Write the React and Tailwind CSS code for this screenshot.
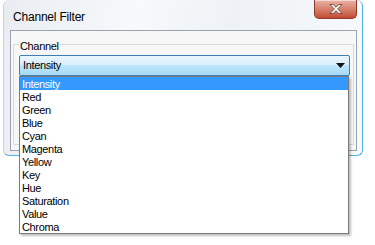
// App.jsx
// Windows 7 style "Channel Filter" dialog with an open channel combo box.
const CHANNELS = [
  'Intensity',
  'Red',
  'Green',
  'Blue',
  'Cyan',
  'Magenta',
  'Yellow',
  'Key',
  'Hue',
  'Saturation',
  'Value',
  'Chroma',
];

const CloseButton = () => (
  <div className="flex h-[19px] w-[43px] items-center justify-center rounded-b-[5px] border border-t-0 border-[#8a3b2c] bg-gradient-to-b from-[#eab3a6] via-[#d7816d] to-[#c24a30] shadow-[inset_0_1px_0_rgba(255,255,255,0.5)]">
    <svg width="14" height="10" viewBox="0 0 14 10" aria-hidden="true">
      <path
        d="M1 0.5h3.2L7 3.3 9.8 0.5H13L8.6 5 13 9.5H9.8L7 6.7 4.2 9.5H1L5.4 5z"
        fill="#ffffff"
        stroke="#5a3a34"
        strokeWidth="0.8"
        strokeLinejoin="round"
      />
    </svg>
  </div>
);

const ComboBox = ({ value }) => (
  <div className="flex h-[21px] items-center justify-between rounded-[2px] border border-[#3c7fb1] bg-[linear-gradient(to_bottom,#eaf6fd_0%,#d9f0fc_45%,#bee6fd_50%,#a7d9f5_100%)] pl-[3px] pr-[4px]">
    <span className="text-[11px] leading-[13px] tracking-[-0.35px] text-black">{value}</span>
    <svg width="9" height="5" viewBox="0 0 9 5" aria-hidden="true">
      <path d="M0 0h9L4.5 5z" fill="#111111" />
    </svg>
  </div>
);

const DropList = ({ items, selected }) => (
  <div className="absolute left-[19px] top-[76px] w-[330px] border border-[#7a7a7a] bg-white shadow-[2px_2px_2px_rgba(0,0,0,0.25)]">
    {items.map((item) => (
      <div
        key={item}
        className={`h-[13px] pl-[2px] text-[11px] leading-[14px] tracking-[-0.35px] ${
          item === selected ? 'bg-[#3399ff] text-white' : 'text-black'
        }`}
      >
        {item}
      </div>
    ))}
  </div>
);

export default function App() {
  const selected = 'Intensity';

  return (
    <div className="relative h-[245px] w-[375px] overflow-hidden bg-white font-['Liberation_Sans',Arial,sans-serif]">
      <div className="ml-[3px] h-[156px] w-[360px] rounded-[6px] border border-t-0 border-l-[#c9d3dc] border-r-[#4fb3e3] border-b-[#4fb3e3] bg-[linear-gradient(100deg,#e9edf2_0%,#f7f9fb_35%,#eef2f6_60%,#f8fafc_100%)]">
        <div className="flex h-[30px] items-start justify-between">
          <span className="pl-[9px] pt-[10px] text-[12px] leading-[14px] tracking-[-0.2px] text-black">
            Channel Filter
          </span>
          <div className="mr-[5px]">
            <CloseButton />
          </div>
        </div>
        <div className="ml-[6px] mr-[5px] h-[121px] border border-[#9aa4ad] bg-[#f7f7f7] px-[2px] pt-[13px]">
          <div className="relative h-[101px] border border-[#d5dce2]">
            <span className="absolute left-[5px] top-[-5px] bg-[#f7f7f7] px-[1px] text-[11px] leading-[13px] tracking-[-0.35px] text-black">
              Channel
            </span>
            <div className="ml-[5px] mr-[3px] pt-[10px]">
              <ComboBox value={selected} />
            </div>
          </div>
        </div>
      </div>
      <DropList items={CHANNELS} selected={selected} />
    </div>
  );
}
